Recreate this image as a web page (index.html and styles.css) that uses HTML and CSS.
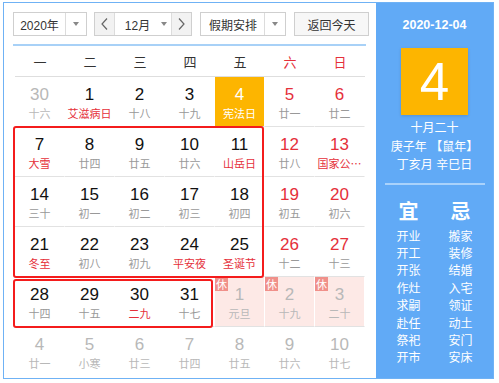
FILE: index.html
```html
<!DOCTYPE html>
<html lang="zh-CN">
<head>
<meta charset="utf-8">
<title>万年历</title>
<link rel="stylesheet" href="styles.css">
</head>
<body>
<div class="cal">
  <div class="main">
    <div class="toolbar">
      <div class="sel sel-year"><span class="sel-text">2020年</span><span class="sel-arrow"><i class="tri"></i></span></div>
      <div class="sel sel-month">
        <span class="nav"><svg width="7" height="12" viewBox="0 0 7 12"><polyline points="6,0.5 1,6 6,11.5" fill="none" stroke="#666" stroke-width="1.2"/></svg></span>
        <span class="sel-text month-text">12月<i class="tri"></i></span>
        <span class="nav nav-next"><svg width="7" height="12" viewBox="0 0 7 12"><polyline points="1,0.5 6,6 1,11.5" fill="none" stroke="#666" stroke-width="1.2"/></svg></span>
      </div>
      <div class="sel sel-holiday"><span class="sel-text">假期安排</span><span class="sel-arrow"><i class="tri"></i></span></div>
      <div class="sel btn-today">返回今天</div>
    </div>
    <div class="board">
      <div class="week">
        <span>一</span><span>二</span><span>三</span><span>四</span><span>五</span><span class="red">六</span><span class="red">日</span>
      </div>
      <div class="days">
        <div class="day other"><b>30</b><em>十六</em></div>
        <div class="day"><b>1</b><em class="fest">艾滋病日</em></div>
        <div class="day"><b>2</b><em>十八</em></div>
        <div class="day"><b>3</b><em>十九</em></div>
        <div class="day today"><b>4</b><em>宪法日</em></div>
        <div class="day wk"><b>5</b><em>廿一</em></div>
        <div class="day wk"><b>6</b><em>廿二</em></div>

        <div class="day"><b>7</b><em class="fest">大雪</em></div>
        <div class="day"><b>8</b><em>廿四</em></div>
        <div class="day"><b>9</b><em>廿五</em></div>
        <div class="day"><b>10</b><em>廿六</em></div>
        <div class="day"><b>11</b><em class="fest">山岳日</em></div>
        <div class="day wk"><b>12</b><em>廿八</em></div>
        <div class="day wk"><b>13</b><em class="fest">国家公…</em></div>

        <div class="day"><b>14</b><em>三十</em></div>
        <div class="day"><b>15</b><em>初一</em></div>
        <div class="day"><b>16</b><em>初二</em></div>
        <div class="day"><b>17</b><em>初三</em></div>
        <div class="day"><b>18</b><em>初四</em></div>
        <div class="day wk"><b>19</b><em>初五</em></div>
        <div class="day wk"><b>20</b><em>初六</em></div>

        <div class="day"><b>21</b><em class="fest">冬至</em></div>
        <div class="day"><b>22</b><em>初八</em></div>
        <div class="day"><b>23</b><em>初九</em></div>
        <div class="day"><b>24</b><em class="fest">平安夜</em></div>
        <div class="day"><b>25</b><em class="fest">圣诞节</em></div>
        <div class="day wk"><b>26</b><em>十二</em></div>
        <div class="day wk"><b>27</b><em>十三</em></div>

        <div class="day"><b>28</b><em>十四</em></div>
        <div class="day"><b>29</b><em>十五</em></div>
        <div class="day"><b>30</b><em class="fest">二九</em></div>
        <div class="day"><b>31</b><em>十七</em></div>
        <div class="day other rest"><span class="badge">休</span><b>1</b><em>元旦</em></div>
        <div class="day other rest"><span class="badge">休</span><b>2</b><em>十九</em></div>
        <div class="day other rest"><span class="badge">休</span><b>3</b><em>二十</em></div>

        <div class="day other last"><b>4</b><em>廿一</em></div>
        <div class="day other last"><b>5</b><em>小寒</em></div>
        <div class="day other last"><b>6</b><em>廿三</em></div>
        <div class="day other last"><b>7</b><em>廿四</em></div>
        <div class="day other last"><b>8</b><em>廿五</em></div>
        <div class="day other last"><b>9</b><em>廿六</em></div>
        <div class="day other last"><b>10</b><em>廿七</em></div>
      </div>
      <div class="mark mark-a"></div>
      <div class="mark mark-b"></div>
    </div>
  </div>
  <aside class="side">
    <div class="side-date">2020-12-04</div>
    <div class="big-day">4</div>
    <div class="lunar">
      <p>十月二十</p>
      <p>庚子年 【鼠年】</p>
      <p>丁亥月 辛巳日</p>
    </div>
    <div class="sep"></div>
    <div class="yiji">
      <div class="col">
        <h3>宜</h3>
        <p>开业</p><p>开工</p><p>开张</p><p>作灶</p><p>求嗣</p><p>赴任</p><p>祭祀</p><p>开市</p>
      </div>
      <div class="col">
        <h3>忌</h3>
        <p>搬家</p><p>装修</p><p>结婚</p><p>入宅</p><p>领证</p><p>动土</p><p>安门</p><p>安床</p>
      </div>
    </div>
  </aside>
</div>
</body>
</html>
```

FILE: styles.css
```css
* { box-sizing: border-box; margin: 0; padding: 0; }
html, body { background: #fff; }
body {
  font-family: "Liberation Sans", "Noto Sans CJK SC", sans-serif;
  color: #222;
  padding: 2px 0 0 3px;
}
.cal {
  display: flex;
  width: 491px;
  height: 377px;
  border: 1px solid #6fb2f5;
  background: #fff;
}
.main {
  width: 372px;
  padding: 9px 0 0 9px;
}
.toolbar {
  display: flex;
  gap: 8px;
  height: 24px;
}
.sel {
  display: flex;
  height: 24px;
  border: 1px solid #cfcfcf;
  background: #fff;
  font-size: 12px;
  color: #333;
  align-items: stretch;
}
.sel-text {
  flex: 1;
  display: flex;
  align-items: center;
  justify-content: center;
}
.sel-arrow {
  width: 21px;
  border-left: 1px solid #dcdcdc;
  display: flex;
  align-items: center;
  justify-content: center;
}
.tri {
  display: inline-block;
  width: 0;
  height: 0;
  border-left: 3.5px solid transparent;
  border-right: 3.5px solid transparent;
  border-top: 4px solid #888;
}
.sel-year { width: 74px; margin-right: -1px; }
.sel-month { width: 98px; }
.nav {
  width: 20px;
  background: #f2f2f2;
  border-right: 1px solid #dcdcdc;
  display: flex;
  align-items: center;
  justify-content: center;
}
.nav-next { border-right: 0; border-left: 1px solid #dcdcdc; }
.month-text { gap: 11px; padding-left: 6px; }
.sel-holiday { width: 86px; }
.sel-holiday .sel-text { justify-content: flex-start; padding-left: 8px; }
.btn-today {
  width: 75px;
  align-items: center;
  justify-content: center;
  background: #f7f7f7;
}
.board {
  position: relative;
  width: 353px;
  margin-top: 8px;
  border-top: 2px solid #a8d1f7;
  padding: 0 1px 0 2px;
}
.week {
  display: grid;
  grid-template-columns: repeat(7, 50px);
  height: 31px;
  border-bottom: 1px solid #dedede;
  font-family: "Noto Sans CJK SC", sans-serif;
  font-size: 13px;
  color: #333;
  text-align: center;
  line-height: 31px;
}
.red { color: #e5303a; }
.days {
  display: grid;
  grid-template-columns: repeat(7, 50px);
  grid-auto-rows: 50px;
}
.day {
  position: relative;
  display: flex;
  flex-direction: column;
  align-items: center;
  padding-top: 8px;
  border-bottom: 1px solid #e2e2e2;
  border-right: 1px solid transparent;
  background-clip: padding-box;
}
.day.last { border-bottom: 0; }
.day b {
  font-weight: normal;
  font-size: 17px;
  line-height: 20px;
  color: #111;
}
.day em {
  font-style: normal;
  font-family: "Noto Sans CJK SC", sans-serif;
  font-size: 11px;
  line-height: 16px;
  color: #999;
  white-space: nowrap;
}
.day em.fest { color: #e5303a; }
.day.wk b { color: #e5303a; }
.day.other b, .day.other em { color: #b8b8b8; }
.day.today { background-color: #fdb500; }
.day.today b, .day.today em { color: #fff; }
.day.rest { background-color: #fde9e6; }
.badge {
  position: absolute;
  left: 0;
  top: 0;
  width: 13px;
  height: 14px;
  background: #f0908a;
  color: #fff;
  font-family: "Noto Sans CJK SC", sans-serif;
  font-size: 11px;
  line-height: 14px;
  text-align: center;
}
.mark {
  position: absolute;
  border: 2px solid #f41c1c;
  border-radius: 3px;
  pointer-events: none;
}
.mark-a { left: 0; top: 80px; width: 251px; height: 152px; }
.mark-b { left: 0; top: 233px; width: 200px; height: 49px; }

.side {
  width: 117px;
  margin-left: auto;
  background: #61aaf6;
  color: #fff;
  display: flex;
  flex-direction: column;
  align-items: center;
  padding-top: 12px;
  font-family: "Liberation Sans", "Noto Sans CJK SC", sans-serif;
}
.side-date {
  font-size: 12.5px;
  line-height: 20px;
  font-weight: bold;
}
.big-day {
  margin-top: 13px;
  width: 67px;
  height: 67px;
  background: #fdb500;
  font-size: 53px;
  line-height: 67px;
  text-align: center;
  box-shadow: 0 1px 3px rgba(0,0,0,0.15);
}
.lunar {
  margin-top: 4px;
  text-align: center;
  font-size: 12px;
  line-height: 18.5px;
}
.sep {
  margin-top: 8px;
  width: 100px;
  height: 2px;
  background: #a9d2fb;
}
.yiji {
  margin-top: 14px;
  display: grid;
  grid-template-columns: 50px 50px;
  column-gap: 2px;
  text-align: center;
}
.yiji h3 {
  font-family: "Noto Sans CJK SC", sans-serif;
  font-size: 20px;
  font-weight: bold;
  line-height: 24px;
  margin-bottom: 4px;
}
.yiji p {
  font-family: "Noto Sans CJK SC", sans-serif;
  font-size: 12px;
  line-height: 17.4px;
}
```
